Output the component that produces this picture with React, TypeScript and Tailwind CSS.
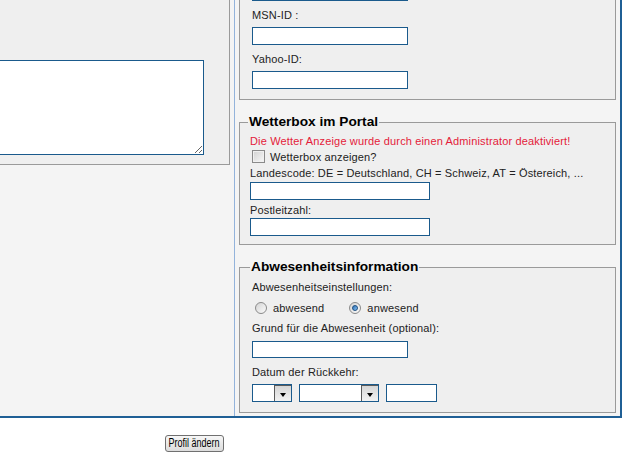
import React from "react";

function TextInput({ w, h = 18 }: { w: number; h?: number }) {
  return (
    <input
      type="text"
      className="block border border-[#1a5a8c] bg-white p-0 outline-none"
      style={{ width: w, height: h }}
    />
  );
}

function Label({ children, className = "" }: { children?: React.ReactNode; className?: string }) {
  return <div className={"h-[14px] leading-[14px] whitespace-nowrap " + className}>{children}</div>;
}

function FakeSelect({ w }: { w: number }) {
  return (
    <div className="flex h-[18px] border border-[#1a5a8c] bg-white" style={{ width: w }}>
      <div className="flex-1" />
      <div className="flex h-[16px] w-[17px] items-end justify-center border-l border-t border-[#5a5a5a] bg-gradient-to-b from-[#d6d6d6] to-[#f2f2f2] pb-[4px]">
        <div className="h-0 w-0 border-l-[3.5px] border-r-[3.5px] border-t-[4px] border-l-transparent border-r-transparent border-t-black" />
      </div>
    </div>
  );
}

function Radio({ checked }: { checked?: boolean }) {
  return (
    <div className="flex h-[12px] w-[12px] shrink-0 items-center justify-center rounded-full border border-[#8a8a8a] bg-gradient-to-br from-[#d4d4d4] to-[#fbfbfb]">
      {checked && (
        <div className="h-[6px] w-[6px] rounded-full border border-[#1d4f82] bg-gradient-to-br from-[#2a6fb5] to-[#8ac4f4]" />
      )}
    </div>
  );
}

function Legend({ children }: { children: React.ReactNode }) {
  return (
    <legend className="ml-[-2px] px-[1px] text-[13.7px] font-bold leading-[16px] tracking-normal text-black">
      {children}
    </legend>
  );
}

export default function App() {
  return (
    <div className="h-[461px] w-[629px] overflow-hidden bg-white font-['Liberation_Sans',Arial,sans-serif] text-[11px] tracking-[0.15px] text-[#222]">
      <div className="mt-[-44px] flex w-[622px] border-b-2 border-r-2 border-[#1f5f95] bg-[#f4f4f4]">
        {/* left column */}
        <div className="w-[235px] shrink-0 border-r border-[#93b3db]">
          <fieldset className="mr-[4px] border border-l-0 border-[#9a9a9a] bg-[#efefef] pb-[9px] pt-[103px]">
            <textarea className="block h-[95px] w-[204px] resize border border-l-0 border-[#1a5a8c] bg-white outline-none" />
          </fieldset>
        </div>

        {/* right column */}
        <div className="w-[385px] shrink-0 px-[4px] pb-[3px]">
          <fieldset className="border border-[#9a9a9a] bg-[#efefef] pb-[10px] pl-[12px]">
            <Label className="mb-[5px] mt-[7px]" />
            <TextInput w={156} />
            <Label className="mb-[5px] mt-[7px]">MSN-ID :</Label>
            <TextInput w={156} />
            <Label className="mb-[5px] mt-[7px]">Yahoo-ID:</Label>
            <TextInput w={156} />
          </fieldset>

          <fieldset className="mt-[14px] border border-[#9a9a9a] bg-[#efefef] pb-[8px] pl-[10px] pt-[4px]">
            <Legend>Wetterbox im Portal</Legend>
            <Label className="text-[#e41b3a]">Die Wetter Anzeige wurde durch einen Administrator deaktiviert!</Label>
            <div className="mt-[2px] flex h-[13px] items-center">
              <div className="ml-[2px] h-[13px] w-[13px] shrink-0 border border-[#8a8a8a] bg-gradient-to-br from-[#d2d2d2] to-[#f8f8f8] shadow-[inset_0_0_0_1px_#f0f0f0]" />
              <span className="ml-[5px] leading-[14px]">Wetterbox anzeigen?</span>
            </div>
            <Label className="mt-[3px]">Landescode: DE = Deutschland, CH = Schweiz, AT = Östereich, ...</Label>
            <div className="mt-[2px]">
              <TextInput w={180} />
            </div>
            <Label className="mt-[3px]">Postleitzahl:</Label>
            <div className="mt-[1px]">
              <TextInput w={180} />
            </div>
          </fieldset>

          <fieldset className="mt-[14px] border border-[#9a9a9a] bg-[#efefef] pb-[10px] pl-[12px] pt-[5px]">
            <Legend>Abwesenheitsinformation</Legend>
            <Label>Abwesenheitseinstellungen:</Label>
            <div className="mt-[8px] flex h-[12px] items-center">
              <div className="ml-[3px]">
                <Radio />
              </div>
              <span className="ml-[6px] leading-[14px]">abwesend</span>
              <div className="ml-[25px]">
                <Radio checked />
              </div>
              <span className="ml-[6px] leading-[14px]">anwesend</span>
            </div>
            <Label className="mt-[7px]">Grund für die Abwesenheit (optional):</Label>
            <div className="mt-[6px]">
              <TextInput w={156} h={17} />
            </div>
            <Label className="mt-[7px]">Datum der Rückkehr:</Label>
            <div className="mt-[5px] flex gap-[7px]">
              <FakeSelect w={40} />
              <FakeSelect w={80} />
              <TextInput w={51} />
            </div>
          </fieldset>
        </div>
      </div>

      <div className="ml-[165px] mt-[17px]">
        <button
          type="button"
          className="flex h-[17px] w-[59px] items-center justify-center overflow-hidden whitespace-nowrap rounded-[3px] border border-[#707070] bg-gradient-to-b from-[#f7f7f7] to-[#dcdcdc] p-0 font-['Liberation_Sans',Arial,sans-serif] text-[12px] leading-[15px] tracking-normal text-black"
        >
          <span className="inline-block scale-x-[0.75]">Profil ändern</span>
        </button>
      </div>
    </div>
  );
}
